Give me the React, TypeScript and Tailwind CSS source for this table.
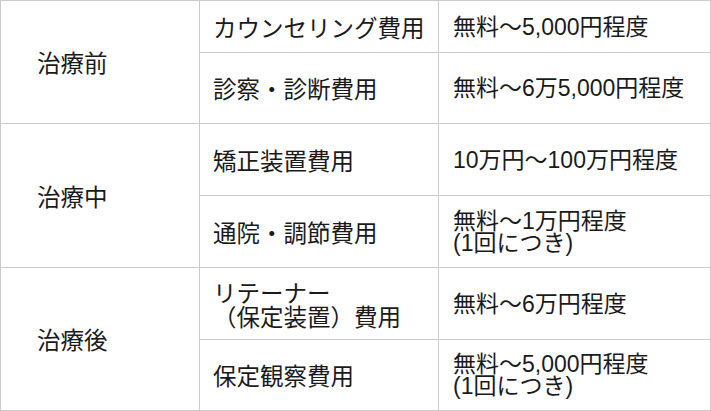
const jp = '[font-family:"Noto_Sans_CJK_JP",sans-serif]';

type Row = { item: string[]; price: string[] };
type Group = { stage: string; rows: Row[] };

const groups: Group[] = [
  {
    stage: '治療前',
    rows: [
      { item: ['カウンセリング費用'], price: ['無料〜5,000円程度'] },
      { item: ['診察・診断費用'], price: ['無料〜6万5,000円程度'] },
    ],
  },
  {
    stage: '治療中',
    rows: [
      { item: ['矯正装置費用'], price: ['10万円〜100万円程度'] },
      { item: ['通院・調節費用'], price: ['無料〜1万円程度', '(1回につき)'] },
    ],
  },
  {
    stage: '治療後',
    rows: [
      { item: ['リテーナー', '（保定装置）費用'], price: ['無料〜6万円程度'] },
      { item: ['保定観察費用'], price: ['無料〜5,000円程度', '(1回につき)'] },
    ],
  },
];

export default function App() {
  return (
    <div className="w-[711px] h-[411px] bg-white">
      <div className="grid grid-cols-[198px_238px_271px] grid-rows-[51px_70px_71px_71px_71px_70px] gap-px bg-[#cccccc] p-px text-[#1a1a1a]">
        {groups.map((g) => (
          <>
            <div
              key={g.stage}
              className={`row-span-2 bg-white flex items-center pl-[36px] text-[23.5px] leading-[24px] ${jp}`}
            >
              {g.stage}
            </div>
            {g.rows.map((r, i) => (
              <>
                <div
                  key={`${g.stage}-item-${i}`}
                  className={`bg-white flex flex-col justify-center pl-[13px] text-[23.5px] leading-[24px] ${jp}`}
                >
                  {r.item.map((t) => (
                    <span key={t}>{t}</span>
                  ))}
                </div>
                <div
                  key={`${g.stage}-price-${i}`}
                  className='bg-white flex flex-col justify-center pl-[14px] text-[23px] leading-[22px] [font-family:"Liberation_Sans","Noto_Sans_CJK_JP",sans-serif]'
                >
                  {r.price.map((t) => (
                    <span key={t}>{t}</span>
                  ))}
                </div>
              </>
            ))}
          </>
        ))}
      </div>
    </div>
  );
}
